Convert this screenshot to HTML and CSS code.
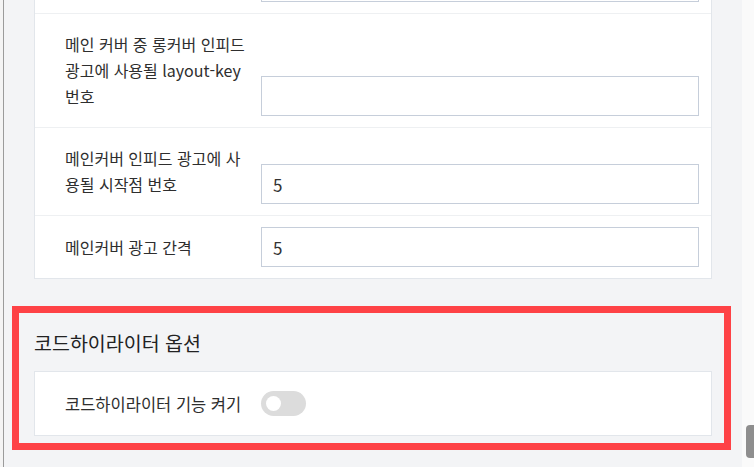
FILE: index.html
```html
<!DOCTYPE html>
<html lang="ko">
<head>
<meta charset="utf-8">
<link rel="stylesheet" href="styles.css">
</head>
<body>
<div class="rail"></div>
<main class="main">
  <div class="card card-top">
    <div class="row">
      <div class="label"></div>
      <input class="field" type="text" value="">
    </div>
    <div class="row">
      <div class="label">메인 커버 중 롱커버 인피드 광고에 사용될 layout-key 번호</div>
      <input class="field" type="text" value="">
    </div>
    <div class="row">
      <div class="label">메인커버 인피드 광고에 사용될 시작점 번호</div>
      <input class="field" type="text" value="5">
    </div>
    <div class="row">
      <div class="label">메인커버 광고 간격</div>
      <input class="field" type="text" value="5">
    </div>
  </div>

  <section class="section">
    <h2 class="section-title">코드하이라이터 옵션</h2>
    <div class="card">
      <div class="row row-toggle">
        <div class="label">코드하이라이터 기능 켜기</div>
        <span class="toggle"><span class="knob"></span></span>
      </div>
    </div>
  </section>
</main>
<div class="scrollbar"><div class="thumb"></div></div>
</body>
</html>
```

FILE: styles.css
```css
* { box-sizing: border-box; }
html, body { margin: 0; padding: 0; }
body {
  display: flex;
  height: 467px;
  overflow: hidden;
  font-family: "Noto Sans CJK KR", "Noto Sans", sans-serif;
  color: #333;
  background: #f3f4f6;
}
.rail {
  width: 4px;
  flex: none;
  background: #f4f4f4;
  border-right: 1px solid #9b9b9b;
}
.main {
  flex: 1;
  background: #f3f4f6;
  padding-left: 30px;
}
.card {
  width: 678px;
  background: #fff;
  border: 1px solid #e2e6eb;
}
.card-top { margin-top: -50px; }
.row {
  display: grid;
  grid-template-columns: 186px 438px;
  column-gap: 10px;
  padding: 0 12px 0 30px;
  border-bottom: 1px solid #eef0f2;
}
.row:last-child { border-bottom: none; }
.label {
  font-size: 16px;
  line-height: 26px;
  padding: 17px 0 18px;
  align-self: center;
  color: #2e2e2e;
}
.field {
  align-self: end;
  margin: 11px 0;
  height: 40px;
  width: 438px;
  border: 1px solid #c6ceda;
  border-radius: 0;
  padding: 0 11px;
  font-family: "Noto Sans CJK KR", "Noto Sans", sans-serif;
  font-size: 17px;
  color: #333;
  background: #fff;
  outline: none;
}
.section {
  margin: 34px 0 0 -15px;
  width: 705px;
  padding: 17px 12px 7px 15px;
  outline: 7px solid #fe4246;
}
.section-title {
  margin: 0 0 15px;
  font-size: 19.5px;
  line-height: 26px;
  font-weight: 400;
  color: #222;
}
.row-toggle {
  height: 63px;
  align-items: center;
}
.row-toggle .label { padding: 0; font-size: 16.5px; }
.toggle {
  position: relative;
  display: block;
  width: 45px;
  height: 25px;
  border-radius: 13px;
  background: #dcdcdc;
}
.knob {
  position: absolute;
  left: 5px;
  top: 5px;
  width: 15px;
  height: 15px;
  border-radius: 50%;
  background: #fff;
}
.scrollbar {
  position: relative;
  width: 12px;
  flex: none;
  background: #fafafa;
}
.thumb {
  position: absolute;
  left: 4px;
  top: 425px;
  width: 12px;
  height: 33px;
  border-radius: 4px;
  background: #8e8e8e;
}
```
